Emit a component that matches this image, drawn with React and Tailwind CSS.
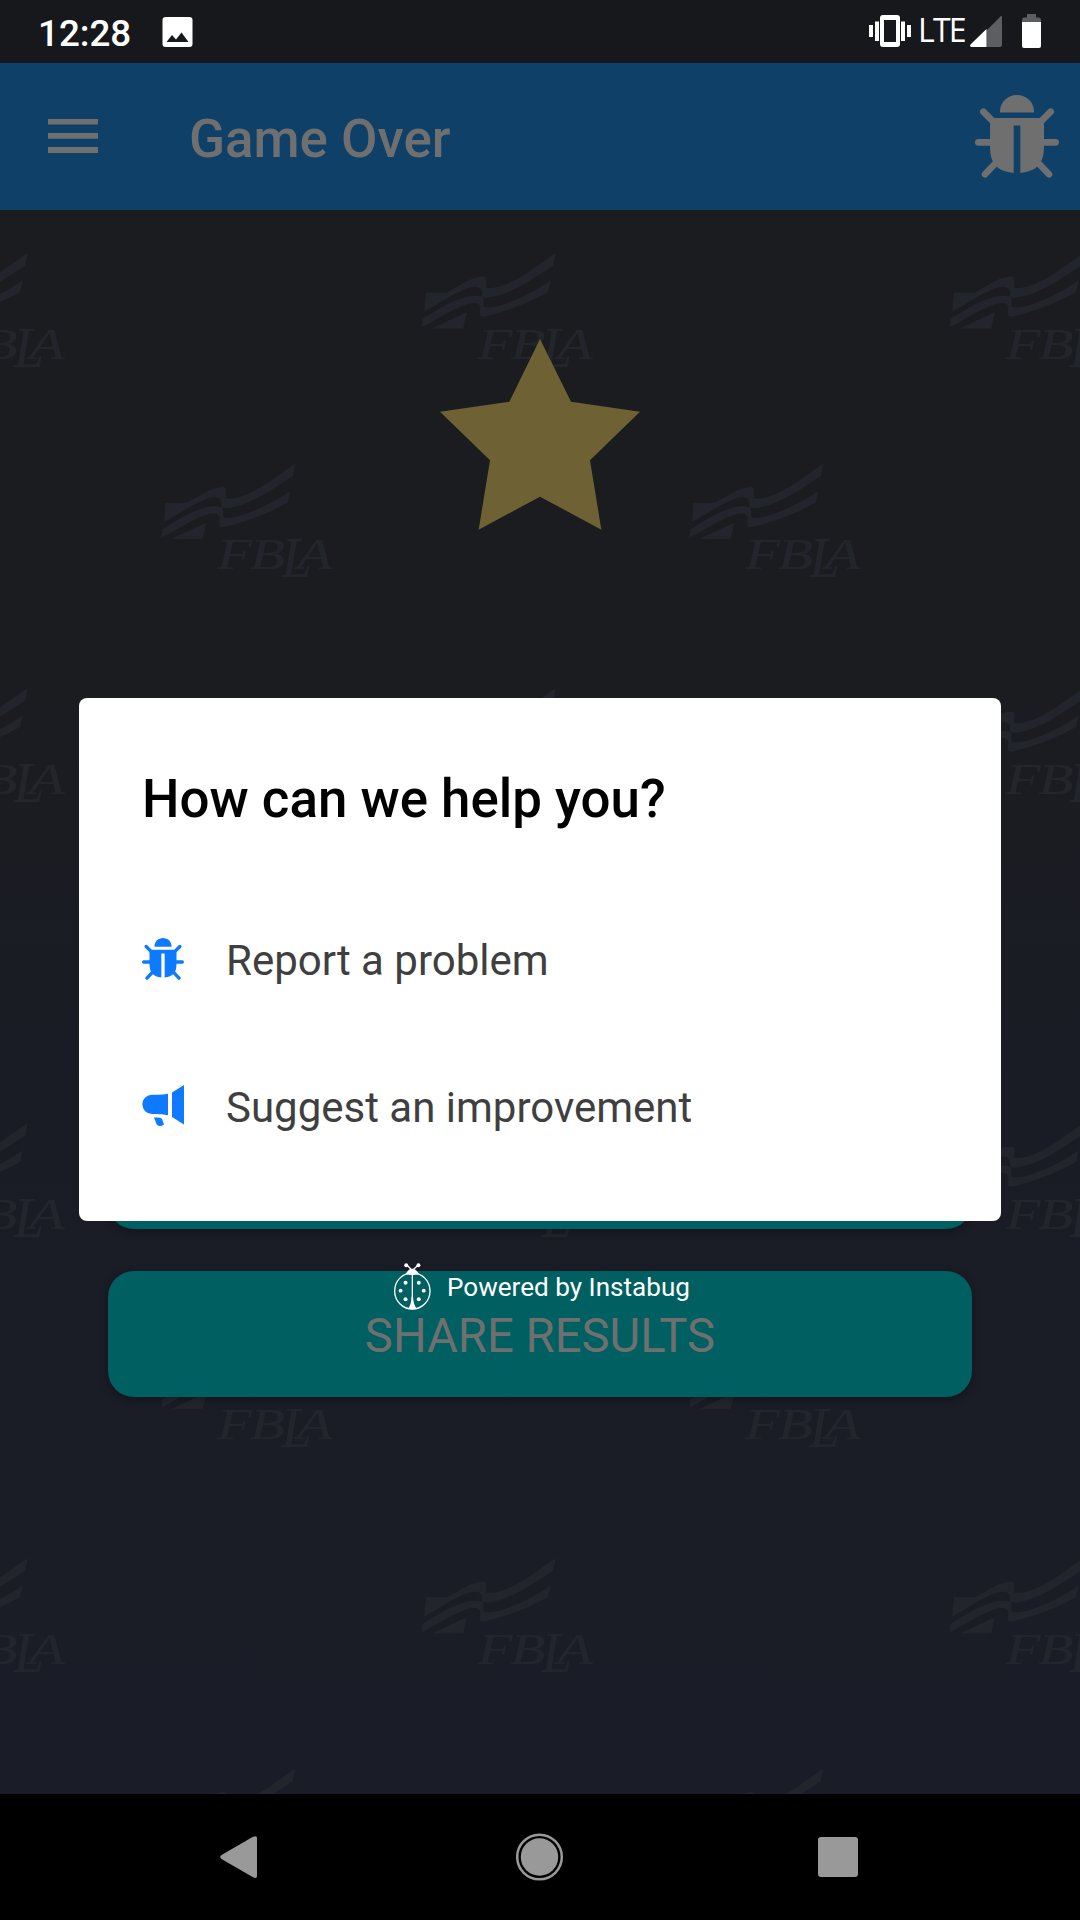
const LETTERS = [
  ["F", 262, 388, 135, 1.26],
  ["B", 360, 388, 135, 1.27],
  ["L", 455, 412, 170, 0.95],
  ["A", 500, 388, 135, 1.3],
];

function Emblem({ transform }) {
  return (
    <g transform={transform}>
      <path d="M107 189H170C205 170 245 142 277 142Q289 142 288 152L286 174Q300 179 330 171C390 153 450 101 495 72L488 108C430 146 370 188 310 201Q288 206 276 202L274 181Q264 165 235 174C190 190 140 225 102 245Z" />
      <path d="M95 292L98 268C150 235 200 205 240 200Q268 196 279 206V232Q300 237 330 228C390 210 440 182 480 154L473 187C420 218 350 245 290 259Q275 263 269 258L270 230Q262 215 235 222C190 235 140 270 95 292Z" />
      <path d="M126 296L228 249L218 296Z" />
      {LETTERS.map(([ch, x, y, size, sx]) => (
        <text
          key={ch}
          transform={`translate(${x} ${y}) scale(${sx} 1)`}
          fontSize={size}
          fontStyle="italic"
          fontFamily="'Liberation Serif', serif"
        >
          {ch}
        </text>
      ))}
    </g>
  );
}

function Watermark() {
  return (
    <svg className="absolute inset-0 h-full w-full" aria-hidden="true">
      <defs>
        <pattern id="fbla" x="100" y="240" width="528" height="435" patternUnits="userSpaceOnUse">
          <g fill="#22262c">
            <Emblem transform="translate(30 200) scale(.33333)" />
            <Emblem transform="translate(290.400 -10.500) scale(.33333)" />
          </g>
        </pattern>
      </defs>
      <rect width="1080" height="1920" fill="url(#fbla)" />
    </svg>
  );
}

function BugIcon({ className }) {
  return (
    <svg viewBox="405 284 252 248" preserveAspectRatio="none" className={className} fill="currentColor">
      <path d="M480 336V333C480 305 503 284 531 284S582 305 582 333V336Z" />
      <path d="M450 353H612V438C612 490 590 512 541 517V375H521V517C472 512 450 490 450 438Z" />
      <path
        d="M430 334L462 366M632 334L600 366M415 425.500H455M647 425.500H607M435 521L470 484M627 521L592 484"
        fill="none"
        stroke="currentColor"
        strokeWidth="20"
        strokeLinecap="round"
      />
    </svg>
  );
}

function MegaphoneIcon() {
  return (
    <svg viewBox="0 0 42 42" className="h-[42px] w-[42px]" fill="currentColor">
      <path d="M42 0V39.500L30 32V7.500Z" />
      <path d="M26 8.700V30.300Q20 29 13 29H10A9.650 9.650 0 0 1 10 9.700H15Q22 9.700 26 8.700Z" />
      <path d="M12 32.500H16Q19 32.500 20 34L22 39.500Q20 41 17.500 41Q15.500 41 14.500 39Z" />
    </svg>
  );
}

function LadybugIcon() {
  return (
    <svg viewBox="72 189 112 141" className="h-[47px] w-[37px]" fill="#fff">
      <ellipse cx="127.500" cy="273" rx="53.500" ry="55" fill="none" stroke="#fff" strokeWidth="4" />
      <path d="M105 223C112 218 114 206 127 206S143 218 150 223Q128 226 105 223Z" />
      <path d="M127 210L112 196M128 210L144 196M127.500 220V310" fill="none" stroke="#fff" strokeWidth="4" />
      <path d="M125.500 290H129.500Q131 315 140 326Q127 331 115 326Q124 315 125.500 290Z" />
      <circle cx="109" cy="195" r="6" />
      <circle cx="146" cy="195" r="6" />
      <circle cx="107" cy="248" r="6" />
      <circle cx="147" cy="248" r="6" />
      <circle cx="92" cy="272" r="6" />
      <circle cx="162" cy="272" r="6" />
      <circle cx="107" cy="298" r="6" />
      <circle cx="147" cy="298" r="6" />
    </svg>
  );
}

function StatusBar() {
  return (
    <div className="flex h-[63px] shrink-0 items-start bg-[#17181c] pl-[38px] pr-[39px] text-white">
      <span className="mt-[12px] w-[124px] text-[36.750px] leading-[43px] font-medium">12:28</span>
      <svg viewBox="0 0 30 30" className="mt-[17px] h-[30px] w-[31px]">
        <path
          fill="#fff"
          fillRule="evenodd"
          d="M3 0H27Q30 0 30 3V27Q30 30 27 30H3Q0 30 0 27V3Q0 0 3 0ZM4 25H26L19 15.500L13.500 22.500L9.500 18Z"
        />
      </svg>
      <div className="ml-auto flex items-start">
        <svg viewBox="0 0 42 32" className="mt-[15px] h-[32px] w-[42px]" fill="#fff">
          <path
            fillRule="evenodd"
            d="M14 0H28Q31 0 31 3V29Q31 32 28 32H14Q11 32 11 29V3Q11 0 14 0ZM15 5V27H27V5Z"
          />
          <path d="M0 10H4V22H0ZM6 6.500H10V26H6ZM32 6.500H36V26H32ZM38 10H42V22H38Z" />
        </svg>
        <span className="ml-[7px] mt-[9px] w-[52px] font-['Open_Sans','Noto_Sans',sans-serif] text-[32px] leading-[42px] tracking-[-1.800px]">
          LTE
        </span>
        <svg viewBox="0 0 32 31" className="mt-[16px] h-[31px] w-[32px]">
          <path d="M16.500 14.500L31 0Q32 0 32 1V29Q32 31 30 31H16.500Z" fill="#5d5e61" />
          <path d="M16.500 13V31H1Q-.5 30 .5 28.500Z" fill="#fff" />
        </svg>
        <svg viewBox="0 0 19 34" className="ml-[20px] mt-[14px] h-[34px] w-[19px]">
          <path d="M5 0H14V3.500H17Q19 3.500 19 6V8H0V6Q0 3.500 2 3.500H5Z" fill="#5d5e61" />
          <path d="M0 8H19V32Q19 34 17 34H2Q0 34 0 32Z" fill="#fff" />
        </svg>
      </div>
    </div>
  );
}

function AppBar() {
  return (
    <header className="relative flex h-[147px] shrink-0 items-center bg-[#0e4068] pl-12 pr-[21px] text-[#6f6f6f]">
      <svg viewBox="0 0 50 34" className="-mt-px h-[34px] w-[50px]" fill="currentColor">
        <path d="M0 0H50V5.500H0ZM0 14H50V19.700H0ZM0 28H50V34H0Z" />
      </svg>
      <h1 className="mt-[5px] ml-[91px] text-[52.900px] leading-[62px] font-medium">Game Over</h1>
      <BugIcon className="ml-auto h-[83px] w-[84px]" />
    </header>
  );
}

function Action({ children }) {
  return (
    <button className="h-[126px] w-[864px] rounded-[26px] bg-[#005f60] pt-1 text-[47.250px] leading-[56px] text-[#6f6f6f] shadow-[0_3px_8px_rgba(0,0,0,0.25)]">
      {children}
    </button>
  );
}

function HelpOption({ icon, children }) {
  return (
    <li className="flex h-[147px] items-center pl-[63px] text-[#0d7aff]">
      <span className="-mt-1">{icon}</span>
      <span className="ml-[42px] text-[42px] leading-[50px] text-[#3f3f3f]">{children}</span>
    </li>
  );
}

function HelpDialog() {
  return (
    <div className="absolute inset-0 flex flex-col items-center pt-[698px]">
      <section className="h-[523px] w-[922px] shrink-0 rounded-lg bg-white pt-[70px]">
        <h2 className="mb-[57px] pl-[63px] text-[52.850px] leading-[62px] font-medium text-black">
          How can we help you?
        </h2>
        <ul>
          <HelpOption icon={<BugIcon className="h-[42px] w-[42px]" />}>Report a problem</HelpOption>
          <HelpOption icon={<MegaphoneIcon />}>Suggest an improvement</HelpOption>
        </ul>
      </section>
      <p className="mt-[42px] flex items-center gap-4 pl-[4px] text-[26.100px] leading-[30px] text-white">
        <LadybugIcon />
        <span>Powered by Instabug</span>
      </p>
    </div>
  );
}

function NavBar() {
  return (
    <nav className="relative flex h-[126px] shrink-0 items-center bg-black pl-[220px] pr-[222px] text-[#999]">
      <svg viewBox="0 0 37 42" className="h-[42px] w-[37px]" fill="currentColor">
        <path d="M1.500 19L33 .8Q37-1 37 2V40Q37 43 33 41.200L1.500 23Q-1 21 1.500 19Z" />
      </svg>
      <svg viewBox="0 0 48 48" className="-mt-px ml-[259px] h-12 w-12" fill="currentColor">
        <circle cx="23.500" cy="24" r="18.700" />
        <circle cx="23.500" cy="24" r="22.300" fill="none" stroke="currentColor" strokeWidth="2.500" />
      </svg>
      <span className="ml-auto h-10 w-10 rounded-[3px] bg-[#999]" />
    </nav>
  );
}

export default function App() {
  return (
    <div className="relative flex h-[1920px] w-[1080px] flex-col overflow-hidden bg-linear-to-b from-[#1b1c20] from-35% via-[#1a1c25] via-55% to-[#1a1c27] font-[Roboto,sans-serif]">
      <Watermark />
      <div className="relative">
        <StatusBar />
      </div>
      <AppBar />
      <main className="relative flex flex-1 flex-col items-center pt-[129px] pb-[397px]">
        <svg viewBox="120 326 600 573" className="h-[191px] w-[200px]" fill="#6e6133">
          <path d="M420 326L513 514L720 544L570 690L604 898L420 799L236 898L270 690L120 544L328 514Z" />
        </svg>
        <div className="mt-auto flex flex-col gap-[42px]">
          <Action />
          <Action>SHARE RESULTS</Action>
        </div>
      </main>
      <NavBar />
      <HelpDialog />
    </div>
  );
}
